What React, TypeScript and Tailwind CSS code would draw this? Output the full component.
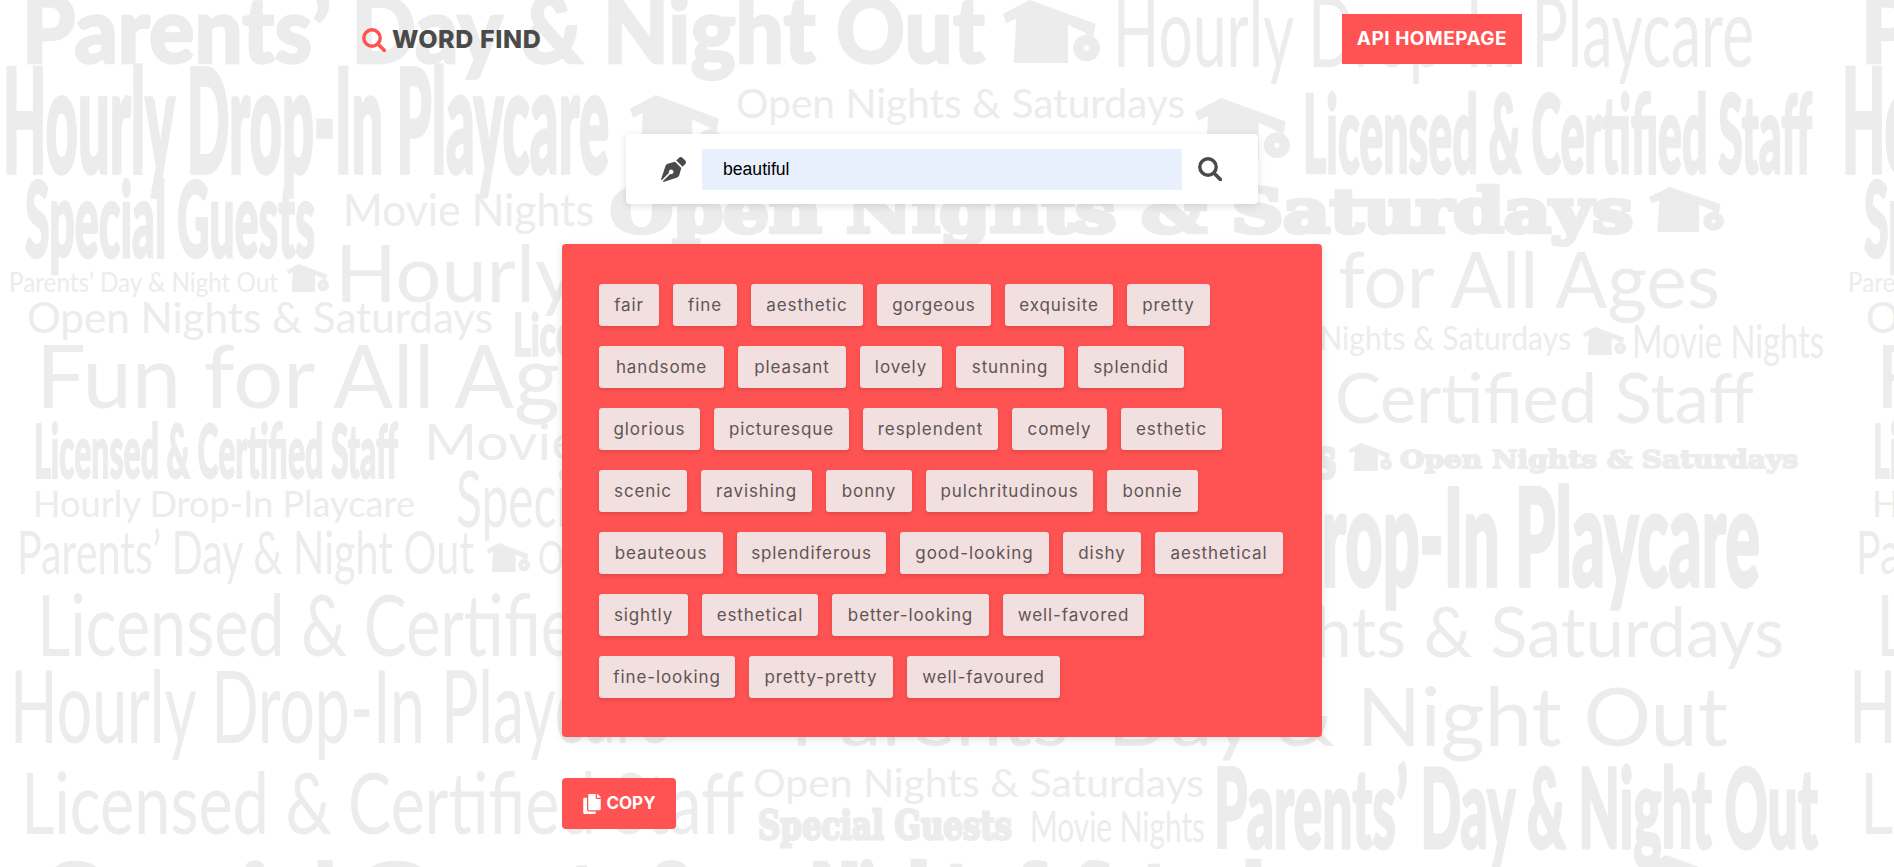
import { FaCopy, FaPenNib } from "react-icons/fa";

type BgWord = [string, number, number, number, number, "heavy" | "light" | "black"];

// word cloud behind the page, [text, left, right, baseline, cap height, weight]
const bgWords: BgWord[] = [
    ["Parents’ Day & Night Out", 22, 985, 63, 66, "heavy"],
    ["Hourly Drop-In Playcare", 1113, 1754, 67, 70, "light"],
    ["Hourly Drop-In Playcare", 3, 609, 173, 104, "heavy"],
    ["Open Nights & Saturdays", 736, 1185, 118, 29, "light"],
    ["Hourly Drop-In Playcare", 790, 1150, 164, 25, "light"],
    ["Licensed & Certified Staff", 1303, 1812, 173, 78, "heavy"],
    ["Special Guests", 25, 315, 257, 75, "heavy"],
    ["Movie Nights", 343, 594, 226, 32, "light"],
    ["Open Nights & Saturdays", 610, 1633, 232, 44, "black"],
    ["Parents’ Day & Night Out", 9, 278, 292, 20, "light"],
    ["Hourly Drop-In Playcare", 335, 1190, 302, 57, "light"],
    ["for All Ages", 1338, 1720, 308, 56, "light"],
    ["Open Nights & Saturdays", 27, 493, 333, 30, "light"],
    ["Licensed & Certified Staff", 513, 900, 356, 43, "heavy"],
    ["Open Nights & Saturdays", 1238, 1571, 350, 23, "light"],
    ["Movie Nights", 1632, 1824, 358, 33, "light"],
    ["Fun for All Ages", 36, 644, 408, 63, "light"],
    ["Licensed &", 1040, 1320, 423, 50, "light"],
    ["Certified Staff", 1335, 1754, 423, 50, "light"],
    ["Licensed & Certified Staff", 34, 398, 478, 53, "heavy"],
    ["Movie Nights", 424, 760, 460, 36, "light"],
    ["Special Guests", 1040, 1336, 477, 40, "black"],
    ["Open Nights & Saturdays", 1400, 1798, 468, 18, "black"],
    ["Hourly Drop-In Playcare", 33, 415, 517, 27, "light"],
    ["Special Guests", 456, 760, 527, 56, "light"],
    ["Parents’ Day & Night Out", 17, 474, 574, 43, "light"],
    ["Open Nights & Saturdays", 538, 900, 574, 34, "light"],
    ["Hourly Drop-In Playcare", 1061, 1760, 586, 98, "heavy"],
    ["Licensed & Certified Staff", 37, 759, 656, 62, "light"],
    ["Open Nights & Saturdays", 1024, 1784, 657, 50, "light"],
    ["Hourly Drop-In Playcare", 10, 670, 743, 72, "light"],
    ["Parents’ Day & Night Out", 790, 1728, 746, 59, "light"],
    ["Licensed & Certified Staff", 21, 744, 834, 62, "light"],
    ["Open Nights & Saturdays", 753, 1204, 797, 28, "light"],
    ["Special Guests", 758, 1012, 839, 28, "black"],
    ["Movie Nights", 1030, 1205, 842, 30, "light"],
    ["Parents’ Day & Night Out", 1214, 1818, 848, 79, "heavy"],
    ["Special Guests", 48, 640, 912, 50, "heavy"],
    ["Open Nights & Saturdays", 650, 1353, 908, 45, "black"],
];

// little cap icons, [left, top, width, height]
const bgIcons = [
    [1003, 0, 97, 63],
    [630, 95, 93, 62],
    [1195, 98, 95, 62],
    [1649, 187, 75, 45],
    [287, 264, 42, 28],
    [1583, 327, 43, 28],
    [1349, 443, 43, 28],
    [487, 543, 43, 29],
    [1640, 855, 95, 62],
];

const words = [
    ["fair", "w-[60px]"],
    ["fine", "w-[64px]"],
    ["aesthetic", "w-[112px]"],
    ["gorgeous", "w-[114px]"],
    ["exquisite", "w-[108px]"],
    ["pretty", "w-[83px]"],
    ["handsome", "w-[125px]"],
    ["pleasant", "w-[108px]"],
    ["lovely", "w-[82px]"],
    ["stunning", "w-[108px]"],
    ["splendid", "w-[106px]"],
    ["glorious", "w-[101px]"],
    ["picturesque", "w-[135px]"],
    ["resplendent", "w-[135px]"],
    ["comely", "w-[95px]"],
    ["esthetic", "w-[101px]"],
    ["scenic", "w-[88px]"],
    ["ravishing", "w-[111px]"],
    ["bonny", "w-[86px]"],
    ["pulchritudinous", "w-[167px]"],
    ["bonnie", "w-[91px]"],
    ["beauteous", "w-[124px]"],
    ["splendiferous", "w-[149px]"],
    ["good-looking", "w-[149px]"],
    ["dishy", "w-[78px]"],
    ["aesthetical", "w-[128px]"],
    ["sightly", "w-[89px]"],
    ["esthetical", "w-[116px]"],
    ["better-looking", "w-[157px]"],
    ["well-favored", "w-[141px]"],
    ["fine-looking", "w-[136px]"],
    ["pretty-pretty", "w-[144px]"],
    ["well-favoured", "w-[153px]"],
];

const strokeFor = { light: 0, heavy: 0.035, black: 0.1 };

const BgTile = ({ dx }: { dx: number }) => (
    <g transform={`translate(${dx} 0)`} fill="#ececec" stroke="#ececec">
        {bgWords.map(([text, x1, x2, base, cap, kind], index) => (
            <text
                key={index}
                x={x1}
                y={base}
                textLength={x2 - x1}
                lengthAdjust="spacingAndGlyphs"
                fontSize={kind === "black" ? cap / 0.73 : cap / 0.72}
                fontFamily={kind === "black" ? "'DejaVu Serif', serif" : "Lato, sans-serif"}
                fontWeight={kind === "light" ? 400 : kind === "heavy" ? 900 : 700}
                strokeWidth={cap * strokeFor[kind]}
            >
                {text}
            </text>
        ))}
        {bgIcons.map(([x, y, w, h], index) => (
            <g key={index} stroke="none" transform={`translate(${x} ${y}) scale(${w / 290} ${h / 190})`}>
                <path d="M0 42 L80 0 L277 72 L270 110 L194 75 L194 190 L32 190 L40 55 L10 70 Z" />
                <rect x="248" y="92" width="5" height="18" />
                <path fillRule="evenodd" d="M250 105 a40 40 0 1 0 .01 0 Z M250 137 a8 8 0 1 1 -.01 0 Z" />
            </g>
        ))}
    </g>
);

const SearchIcon = ({ className }: { className: string }) => (
    <svg viewBox="0 0 24 24" fill="none" stroke="currentColor" strokeLinecap="round" className={className}>
        <circle cx="10" cy="10" r="8.2" strokeWidth="3.4" />
        <path d="M16.4 16.4 L22.4 22.4" strokeWidth="3.6" />
    </svg>
);

const App = () => {
    return (
        <div className="relative h-[867px] overflow-hidden bg-white font-['Inter',sans-serif]">
            <svg className="absolute inset-0 h-full w-full">
                <BgTile dx={0} />
                <BgTile dx={1839} />
            </svg>

            <div className="relative w-[1884px]">
                <header className="flex items-start justify-between pl-[362px] pr-[362px] pt-[14px]">
                    <div className="mt-[13px] flex items-center gap-[6px]">
                        <SearchIcon className="h-6 w-6 text-[#ff5252]" />
                        <span className="text-[25px] font-extrabold leading-none tracking-[0.6px] text-[#4a4a4a]">WORD FIND</span>
                    </div>
                    <a className="flex h-[50px] w-[180px] items-center justify-center bg-[#ff5252] text-[19px] font-bold tracking-[0.5px] text-white">
                        API HOMEPAGE
                    </a>
                </header>

                <div className="mx-auto mt-[70px] flex h-[70px] w-[632px] items-center rounded bg-white pl-[35px] shadow-[0_2px_8px_rgba(0,0,0,0.12)]">
                    <FaPenNib className="h-[25px] w-[25px] text-[#4a4a4a]" />
                    <input
                        readOnly
                        value="beautiful"
                        className="ml-[16px] h-[41px] w-[480px] bg-[#e8f0fe] pl-[21px] font-['Liberation_Sans',sans-serif] text-[17.6px] text-black outline-none"
                    />
                    <SearchIcon className="ml-[16px] h-6 w-6 text-[#4a4a4a]" />
                </div>

                <div className="mx-auto mt-[40px] w-[760px]">
                    <div className="flex h-[493px] flex-wrap content-start gap-x-[14px] gap-y-5 rounded bg-[#ff5252] px-[37px] py-[40px] shadow-[0_2px_8px_rgba(0,0,0,0.12)]">
                        {words.map(([word, width]) => (
                            <span
                                key={word}
                                className={`flex h-[42px] items-center justify-center rounded-[3px] bg-[#f2e0e0] pt-[1px] text-[17px] tracking-[0.9px] text-[#5f5555] shadow-[0_2px_4px_rgba(0,0,0,0.12)] ${width}`}
                            >
                                {word}
                            </span>
                        ))}
                    </div>

                    <button className="mt-[41px] flex h-[51px] w-[114px] items-center justify-center gap-[4px] rounded bg-[#ff5252] text-[17px] font-bold text-white">
                        <FaCopy className="h-5 w-5" />
                        COPY
                    </button>
                </div>
            </div>
        </div>
    );
};

export default App;
